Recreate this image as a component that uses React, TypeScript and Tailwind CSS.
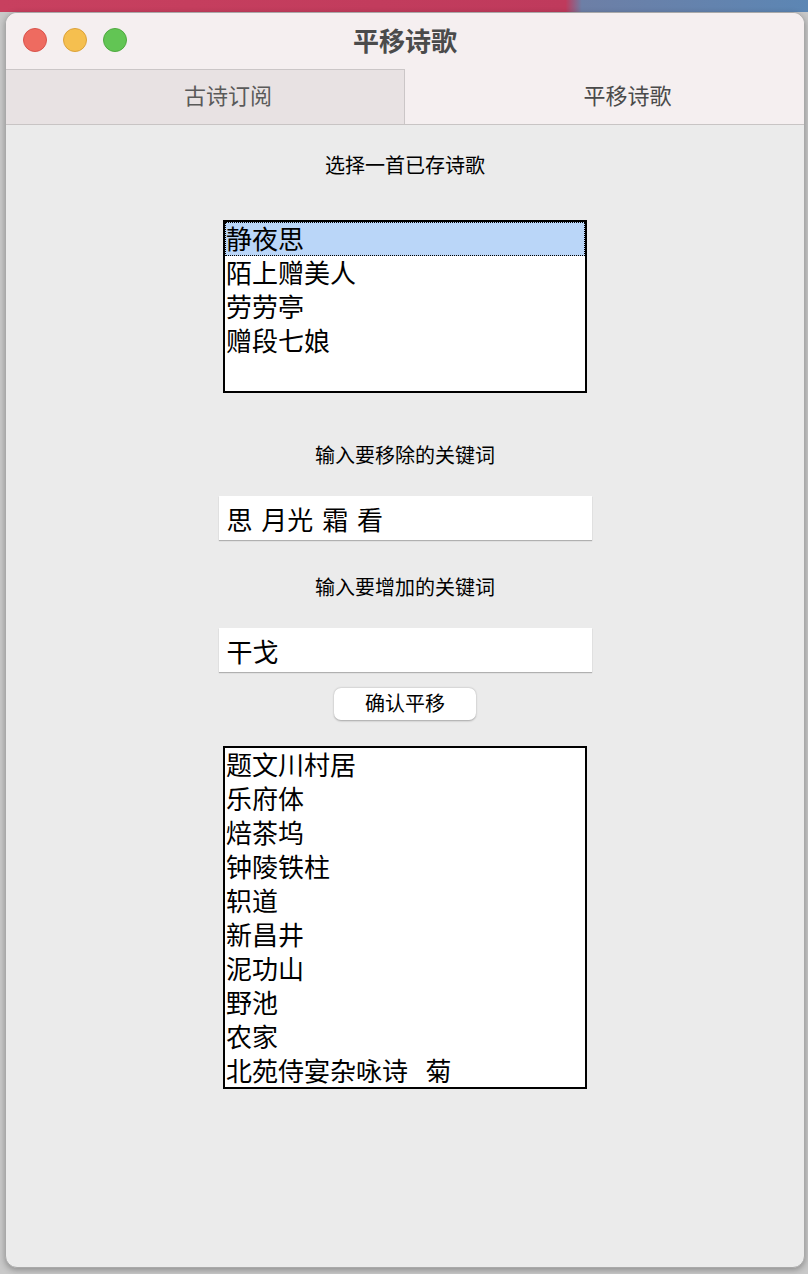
const cjk = "font-['Noto_Sans_CJK_SC','Noto_Sans',sans-serif]";

const saved = ["静夜思", "陌上赠美人", "劳劳亭", "赠段七娘"];
const results = ["题文川村居", "乐府体", "焙茶坞", "钟陵铁柱", "轵道", "新昌井", "泥功山", "野池", "农家", "北苑侍宴杂咏诗   菊"];

function Lights() {
  return (
    <div className="flex items-center gap-4 pl-[17px] pb-[3px]">
      <span className="h-6 w-6 rounded-full border border-[#d9534b] bg-[#ee6b60]" />
      <span className="h-6 w-6 rounded-full border border-[#dca23a] bg-[#f5bf4f]" />
      <span className="h-6 w-6 rounded-full border border-[#4fa93f] bg-[#62c554]" />
    </div>
  );
}

function Field({ value }: { value: string }) {
  return (
    <div className="flex h-[44px] w-[373px] items-center bg-white pl-2 text-[26px] text-black whitespace-pre [word-spacing:3px] shadow-[0_1px_1px_rgba(0,0,0,0.25)]">
      {value}
    </div>
  );
}

export default function App() {
  const picked = 0;
  return (
    <div className={`h-[1274px] w-[808px] overflow-hidden bg-[#c9c9c9] ${cjk}`}>
      <div className="h-[12px] w-full bg-[linear-gradient(to_right,#c8405f_0%,#bf3a5c_70%,#6d7fa6_72%,#5c86b4_100%)]" />
      <div className="mx-[5px] flex h-[1256px] w-[800px] flex-col overflow-hidden rounded-[12px] border border-[#a9a9a9] bg-[#ebebeb] shadow-[0_2px_6px_rgba(0,0,0,0.3)]">
        <div className="relative flex h-[56px] shrink-0 items-center bg-[#f5eff0]">
          <Lights />
          <div className="absolute inset-0 flex items-center justify-center pb-[4px] text-[26px] font-bold text-[#4b4b4b]">平移诗歌</div>
        </div>
        <div className="flex h-[56px] shrink-0 border-b border-[#c8c4c4]">
          <div className="flex w-1/2 items-center justify-center border-t border-r border-[#cbc6c7] bg-[#e8e2e3] pb-[5px] pl-[46px] text-[22px] text-[#5a5a5a]">古诗订阅</div>
          <div className="flex w-1/2 items-center justify-center bg-[#f5eff0] pb-[5px] pl-[46px] text-[22px] text-[#4a4a4a]">平移诗歌</div>
        </div>
        <div className="flex flex-col items-center pt-[28px] text-black">
          <p className="h-6 text-[20px] leading-6">选择一首已存诗歌</p>
          <div className="mt-[43px] h-[173px] w-[364px] border-2 border-black bg-white text-[26px] leading-[34px]">
            {saved.map((name, i) => (
              <div
                key={name}
                className={i === picked ? "h-[34px] border border-dotted border-black bg-[#bad6f8] leading-[30px]" : "h-[34px] leading-[32px] pl-px"}
              >
                {name}
              </div>
            ))}
          </div>
          <p className="mt-[50px] h-6 text-[20px] leading-6">输入要移除的关键词</p>
          <div className="mt-[29px]">
            <Field value="思 月光 霜 看" />
          </div>
          <p className="mt-[35px] h-6 text-[20px] leading-6">输入要增加的关键词</p>
          <div className="mt-[29px]">
            <Field value="干戈" />
          </div>
          <button
            type="button"
            className="mt-[16px] h-[32px] w-[142px] rounded-[7px] bg-white pb-[2px] text-[20px] text-black shadow-[0_0.5px_2px_rgba(0,0,0,0.3)]"
          >
            确认平移
          </button>
          <div className="mt-[26px] h-[343px] w-[364px] border-2 border-black bg-white pl-px text-[26px] leading-[32px]">
            {results.map((name) => (
              <div key={name} className="h-[34px] whitespace-pre">
                {name}
              </div>
            ))}
          </div>
        </div>
      </div>
    </div>
  );
}
